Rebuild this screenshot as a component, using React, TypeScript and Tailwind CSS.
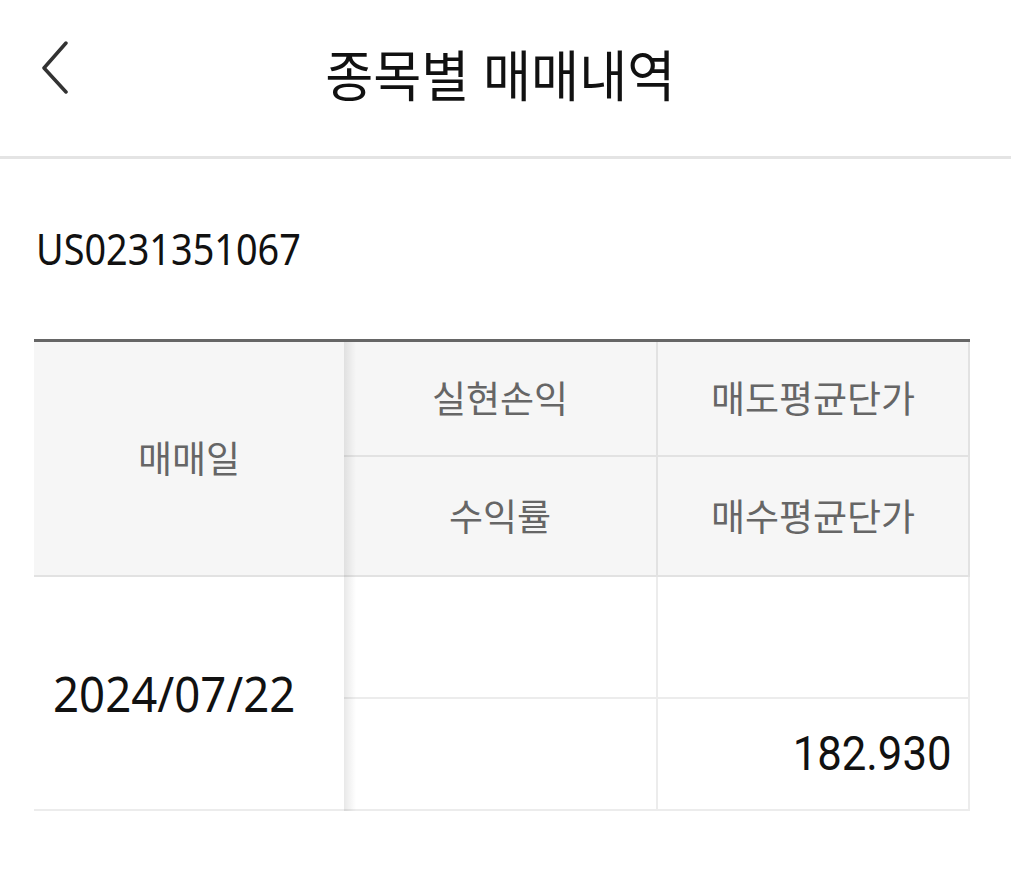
import React from "react";

const kr = "font-['Noto_Sans','Noto_Sans_CJK_KR',sans-serif]";

export default function App() {
  return (
    <div className={`w-[1011px] h-[883px] bg-white ${kr}`}>
      {/* Header */}
      <div className="flex h-[159px] items-center border-b-[3px] border-[#e4e4e4]">
        <div className="flex w-[100px] items-center pb-[22px] pl-[40px]">
          <svg width="30" height="54" viewBox="0 0 30 54" fill="none">
            <polyline
              points="26,3 4,28 26,52"
              stroke="#333"
              strokeWidth="3.5"
              strokeLinecap="round"
              strokeLinejoin="round"
            />
          </svg>
        </div>
        <div className="flex flex-1 justify-center pb-[8px]">
          <span className="inline-block origin-center scale-x-[0.95] text-[55px] leading-none text-[#111]">
            종목별 매매내역
          </span>
        </div>
        <div className="w-[111px]" />
      </div>

      {/* Code */}
      <div className="flex h-[180px] items-start px-[36px] pt-[68px]">
        <span className="inline-block origin-left scale-x-[0.88] text-[43px] leading-none text-[#111]">
          US0231351067
        </span>
      </div>

      {/* Table */}
      <div className="ml-[34px] mr-[41px] border-t-[3px] border-[#666]">
        {/* Head */}
        <div className="flex">
          <div className="flex h-[235px] w-[310px] items-center justify-center border-b-2 border-[#e2e2e2] bg-[#f6f6f6]">
            <Label>매매일</Label>
          </div>
          <div className="relative flex flex-1 flex-col">
            <div className="flex h-[115px]">
              <div className="flex w-[312px] items-center justify-center border-b-2 border-[#e2e2e2] bg-[#f6f6f6]">
                <Label>실현손익</Label>
              </div>
              <div className="flex flex-1 items-center justify-center border-x-2 border-b-2 border-[#e2e2e2] bg-[#f6f6f6]">
                <Label>매도평균단가</Label>
              </div>
            </div>
            <div className="flex h-[120px]">
              <div className="flex w-[312px] items-center justify-center border-b-2 border-[#e2e2e2] bg-[#f6f6f6]">
                <Label>수익률</Label>
              </div>
              <div className="flex flex-1 items-center justify-center border-x-2 border-b-2 border-[#e2e2e2] bg-[#f6f6f6]">
                <Label>매수평균단가</Label>
              </div>
            </div>
            <div className="absolute inset-y-0 left-0 w-[12px] bg-linear-to-r from-[rgba(0,0,0,0.09)] to-transparent" />
          </div>
        </div>
        {/* Body */}
        <div className="flex">
          <div className="flex h-[234px] w-[310px] items-center border-b-2 border-[#ececec] bg-white pl-[19px]">
            <span className="inline-block origin-left scale-x-[0.93] text-[49px] leading-none text-[#111]">
              2024/07/22
            </span>
          </div>
          <div className="relative flex flex-1 flex-col">
            <div className="flex h-[122px]">
              <div className="w-[312px] border-b-2 border-[#ececec] bg-white" />
              <div className="flex-1 border-x-2 border-b-2 border-[#ececec] bg-white" />
            </div>
            <div className="flex h-[112px]">
              <div className="w-[312px] border-b-2 border-[#ececec] bg-white" />
              <div className="flex flex-1 items-center justify-end border-x-2 border-b-2 border-[#ececec] bg-white pr-[16px]">
                <span className="inline-block origin-right scale-x-[0.91] font-['Roboto',sans-serif] text-[48px] leading-none text-[#111]">
                  182.930
                </span>
              </div>
            </div>
            <div className="absolute inset-y-0 left-0 w-[12px] bg-linear-to-r from-[rgba(0,0,0,0.09)] to-transparent" />
          </div>
        </div>
      </div>
    </div>
  );
}

function Label({ children }: { children: React.ReactNode }) {
  return (
    <span className="inline-block text-[37px] leading-none text-[#666]">
      {children}
    </span>
  );
}
